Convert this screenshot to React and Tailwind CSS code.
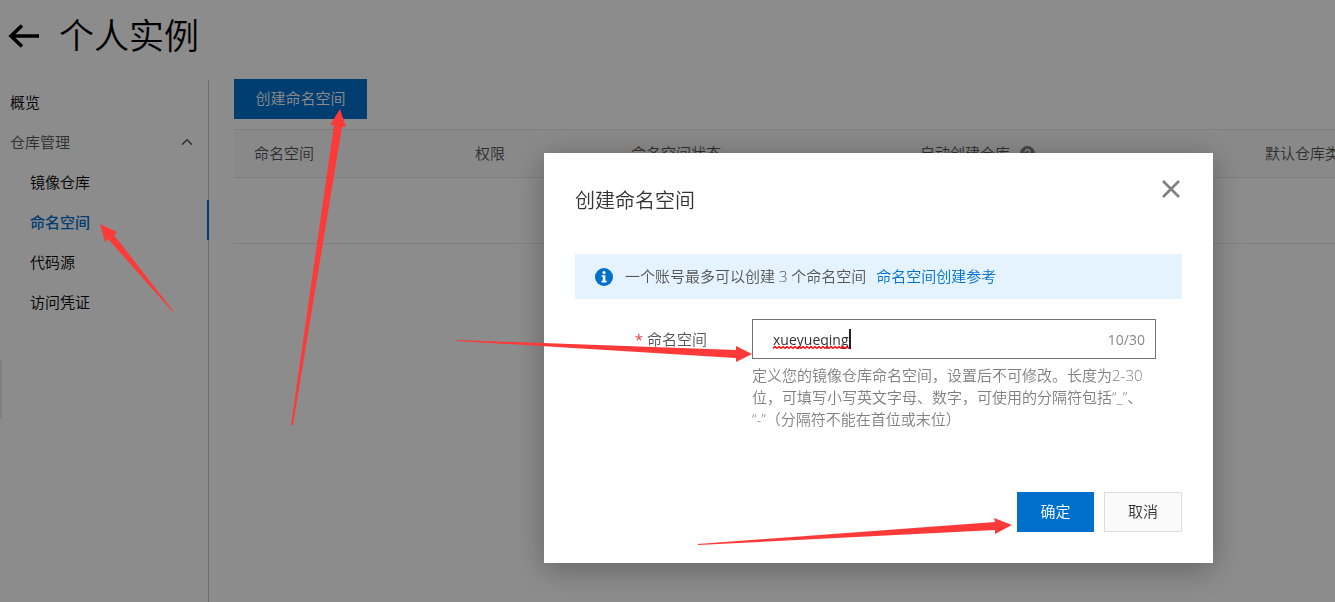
import React, { useState } from 'react';
import { ChevronUp } from 'lucide-react';

const MENU = ['镜像仓库', '命名空间', '代码源', '访问凭证'];

const ARROWS = [
  '291,425 334,125 330,125 340,109 346,127 342,127 293,425',
  '174,312 172,311 108,239 105,242 100,224 117,232 114,235',
  '457,340 736,350 736,346 752,354 736,362 736,358 457,341',
  '698,544 995,522 994,518 1012,525 995,534 995,530 698,545',
];

function InfoIcon() {
  return (
    <svg className="h-[18px] w-[18px] shrink-0" viewBox="0 0 18 18" aria-hidden="true">
      <circle cx="9" cy="9" r="9" fill="#0070cc" />
      <circle cx="9" cy="4.6" r="1.6" fill="#fff" />
      <path d="M6.6 7.2h3.8v5.6h1.2v1.6H6.6v-1.6h1.2V8.8H6.6z" fill="#fff" />
    </svg>
  );
}

function HelpIcon() {
  return (
    <svg className="h-[15px] w-[15px]" viewBox="0 0 16 16" aria-hidden="true">
      <circle cx="8" cy="8" r="8" fill="#808080" />
      <path d="M5.6 6.2a2.4 2.4 0 1 1 3.6 2.1c-.8.4-1.2.8-1.2 1.6" stroke="#fff" strokeWidth="1.6" fill="none" />
      <circle cx="8" cy="12" r="1" fill="#fff" />
    </svg>
  );
}

function Sidebar() {
  return (
    <nav className="w-[209px] shrink-0 border-r border-[#c4c4c4] text-black">
      <a href="#overview" className="flex h-10 items-center pl-[10px] pt-1">概览</a>
      <button className="flex h-10 w-full items-center justify-between pl-[10px] pr-3 pt-1 text-[#555]">
        仓库管理
        <ChevronUp className="h-[18px] w-[18px]" strokeWidth={2} />
      </button>
      <ul>
        {MENU.map((name) => (
          <li key={name}>
            <a
              href="#menu"
              className={
                name === '命名空间'
                  ? '-mr-px flex h-10 items-center border-r-2 border-[#0070cc] pl-[30px] pt-1 font-medium text-[#0070cc]'
                  : 'flex h-10 items-center pl-[30px] pt-1'
              }
            >
              {name}
            </a>
          </li>
        ))}
      </ul>
    </nav>
  );
}

function NamespaceTable() {
  return (
    <table className="mt-[10px] w-[1200px] table-fixed border-collapse text-left text-[#555]">
      <thead>
        <tr className="h-12 border-y border-[#e8e8e8] bg-[#fafafa]">
          <th className="w-[221px] px-5 font-[350]">命名空间</th>
          <th className="w-[156px] px-5 font-[350]">权限</th>
          <th className="w-[289px] px-5 font-[350]">命名空间状态</th>
          <th className="w-[345px] px-5 font-[350]">
            <span className="flex items-center gap-[10px]">自动创建仓库 <HelpIcon /></span>
          </th>
          <th className="whitespace-nowrap px-5 font-[350]">默认仓库类型</th>
        </tr>
      </thead>
      <tbody>
        <tr className="h-[66px] border-b border-[#e8e8e8]">
          <td colSpan={5} />
        </tr>
      </tbody>
    </table>
  );
}

function CreateDialog() {
  const [name, setName] = useState('xueyueqing');

  return (
    <div
      role="dialog"
      aria-labelledby="dialog-title"
      className="relative w-[669px] bg-white px-[31px] pb-[31px] pt-[33px] text-[#555] shadow-[0_6px_30px_rgba(0,0,0,0.3)]"
    >
      <h2 id="dialog-title" className="text-[20px] font-[350] leading-[30px] text-[#333]">创建命名空间</h2>
      <button className="absolute right-8 top-[26px]" aria-label="关闭">
        <svg className="h-5 w-5" viewBox="0 0 20 20" stroke="#808080" strokeWidth="2.6" fill="none">
          <path d="M2 2l16 16M18 2L2 18" />
        </svg>
      </button>

      <div className="mt-[38px] flex h-[45px] items-center bg-[#e4f3fe] px-5">
        <InfoIcon />
        <p className="ml-3">一个账号最多可以创建 3 个命名空间</p>
        <a href="#reference" className="ml-[10px] text-[#0070cc]">命名空间创建参考</a>
      </div>

      <div className="mt-5 flex">
        <label htmlFor="namespace" className="w-[132px] shrink-0 text-right leading-10">
          <span className="mr-1 font-normal text-[#e04040]">*</span>命名空间
        </label>
        <div className="ml-[45px] w-[404px]">
          <div className="relative flex h-10 items-center border border-[#737373] pl-5 pr-[10px] pt-0.5 text-sm font-normal">
            <input
              id="namespace"
              value={name}
              onChange={(e) => setName(e.target.value)}
              spellCheck={false}
              className="h-5 min-w-0 flex-1 text-[#333] outline-none"
            />
            {/* spelling mark and text caret */}
            <svg className="absolute left-5 top-[26px] h-[3px] w-[76px]" aria-hidden="true">
              <defs>
                <pattern id="wave" width="4" height="3" patternUnits="userSpaceOnUse">
                  <path d="M0 2.5L2 .5L4 2.5" stroke="#f00" strokeWidth="1.4" fill="none" />
                </pattern>
              </defs>
              <rect width="76" height="3" fill="url(#wave)" />
            </svg>
            <span className="absolute left-24 top-[9px] h-5 w-[2px] bg-[#222]" />
            <span className="text-[#888]">{name.length}/30</span>
          </div>
          <p className="mt-[5px] leading-[22px] text-[#808080] [text-spacing-trim:space-all]">
            定义您的镜像仓库命名空间，设置后不可修改。长度为2-30位，可填写小写英文字母、数字，可使用的分隔符包括“_”、
            <br />
            “-”（分隔符不能在首位或末位）
          </p>
        </div>
      </div>

      <div className="mt-[62px] flex justify-end gap-[10px]">
        <button className="h-10 w-[77px] bg-[#0070cc] pb-0.5 text-white">确定</button>
        <button className="h-10 w-[78px] border border-[#dedede] bg-[#fafafa] pb-0.5 text-[#333]">取消</button>
      </div>
    </div>
  );
}

export default function App() {
  return (
    <div className="relative flex min-h-screen flex-col overflow-hidden bg-white font-['Open_Sans','Noto_Sans_CJK_SC',sans-serif] text-[15px] font-[350]">
      <header className="flex h-20 items-center pb-2 pl-2">
        <button aria-label="返回">
          <svg className="h-6 w-8" viewBox="0 0 32 24" stroke="#000" strokeWidth="3.6" fill="none">
            <path d="M14 1.5L3 12L14 22.5M2.5 12H31" />
          </svg>
        </button>
        <h1 className="ml-[19px] text-[35px] font-[350] leading-[50px] text-black">个人实例</h1>
      </header>

      <div className="flex flex-1">
        <Sidebar />
        <main className="-mt-px min-w-0 flex-1 overflow-hidden pl-[25px]">
          <button className="h-10 w-[133px] bg-[#0070cc] pb-0.5 text-white">创建命名空间</button>
          <NamespaceTable />
        </main>
      </div>
      <span className="absolute left-0 top-[359px] h-[60px] w-[2px] rounded-r bg-[#e6e6e6]" />

      <div className="fixed inset-0 flex items-start justify-end bg-black/45 pr-[122px] pt-[153px]">
        <CreateDialog />
      </div>

      <svg className="pointer-events-none fixed inset-0 h-full w-full" fill="#fd3a3a" aria-hidden="true">
        {ARROWS.map((points) => (
          <polygon key={points} points={points} />
        ))}
      </svg>
    </div>
  );
}
